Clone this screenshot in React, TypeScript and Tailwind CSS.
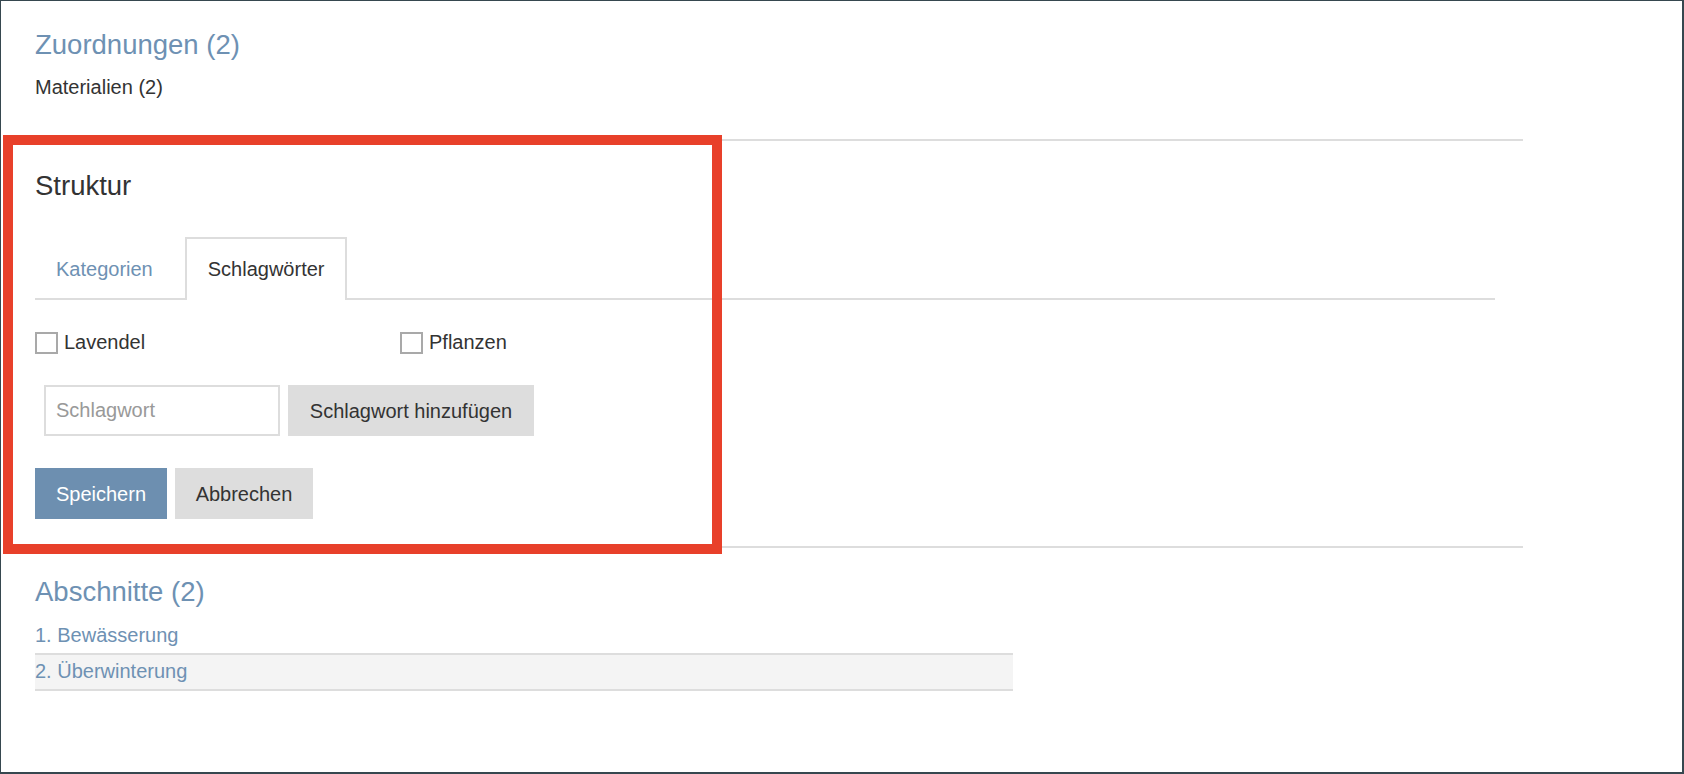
import { useState } from "react";

const sections = ["1. Bewässerung", "2. Überwinterung"];
const tags = ["Lavendel", "Pflanzen"];

export default function App() {
  const [tab, setTab] = useState("tags");
  const [checked, setChecked] = useState<Record<string, boolean>>({});

  return (
    <div className="relative h-[774px] w-full border-t border-l border-r-2 border-b-2 border-[#36474f] bg-white font-['Liberation_Sans',Arial,sans-serif] text-[#333]">
      <div className="w-[1522px] pl-[34px]">
        {/* Zuordnungen */}
        <div className="pt-[27px]">
          <h2 className="text-[27.5px] leading-[33px] text-[#6e91b3]">Zuordnungen (2)</h2>
          <p className="mt-[13px] text-[20px] leading-[27px]">Materialien (2)</p>
        </div>
        <div className="mt-[38px] h-[2px] bg-[#dddddd]" />

        {/* Struktur */}
        <div className="pt-[28px]">
          <h2 className="text-[27.5px] leading-[33px] text-[#333]">Struktur</h2>

          <div className="mt-[35px] w-[1460px]">
            <div className="flex border-b-2 border-[#dddddd]">
              <button
                onClick={() => setTab("cats")}
                className={`-mb-[2px] mr-[11px] border-2 border-b-0 px-[19px] pt-[17px] pb-[17px] text-[20px] leading-[27px] ${
                  tab === "cats" ? "border-[#dddddd] bg-white text-[#333]" : "border-transparent text-[#6e91b3]"
                }`}
              >
                Kategorien
              </button>
              <button
                onClick={() => setTab("tags")}
                className={`-mb-[2px] border-2 border-b-0 px-[21px] pt-[17px] pb-[17px] text-[20px] leading-[27px] ${
                  tab === "tags" ? "border-[#dddddd] bg-white text-[#333]" : "border-transparent text-[#6e91b3]"
                }`}
              >
                Schlagwörter
              </button>
            </div>

            <div className="mt-[29px] grid grid-cols-4">
              {tags.map((t) => (
                <label key={t} className="flex items-center gap-[6px] text-[20px] leading-[27px]">
                  <span
                    onClick={() => setChecked((c) => ({ ...c, [t]: !c[t] }))}
                    className="flex h-[22px] w-[23px] items-center justify-center border-2 border-[#a9a9a9] bg-white text-[14px]"
                  >
                    {checked[t] ? "✓" : ""}
                  </span>
                  {t}
                </label>
              ))}
            </div>
          </div>

          <div className="mt-[29px] ml-[9px] flex gap-[8px]">
            <input
              placeholder="Schlagwort"
              className="h-[51px] w-[236px] border-2 border-[#dddddd] px-[10px] text-[20px] outline-none placeholder:text-[#999]"
            />
            <button className="h-[51px] w-[246px] bg-[#dddddd] text-[20px] text-[#333]">
              Schlagwort hinzufügen
            </button>
          </div>

          <div className="mt-[32px] flex gap-[8px]">
            <button className="h-[51px] w-[132px] bg-[#6d8fb0] text-[20px] text-white">Speichern</button>
            <button className="h-[51px] w-[138px] bg-[#dddddd] text-[20px] text-[#333]">Abbrechen</button>
          </div>
        </div>
        <div className="mt-[27px] h-[2px] bg-[#dddddd]" />

        {/* Abschnitte */}
        <div className="pt-[27px]">
          <h2 className="text-[27.5px] leading-[33px] text-[#6e91b3]">Abschnitte (2)</h2>
          <ul className="mt-[11px] w-[978px]">
            {sections.map((s, i) => (
              <li
                key={s}
                className={`border-b-2 border-[#dddddd] pt-[3px] pb-[4px] text-[20px] leading-[27px] text-[#6e91b3] ${
                  i % 2 === 1 ? "bg-[#f4f4f4]" : ""
                }`}
              >
                {s}
              </li>
            ))}
          </ul>
        </div>
      </div>

      {/* annotation frame */}
      <div className="pointer-events-none absolute left-[2px] top-[134px] h-[419px] w-[719px] border-[10px] border-[#e8402a]" />
    </div>
  );
}
